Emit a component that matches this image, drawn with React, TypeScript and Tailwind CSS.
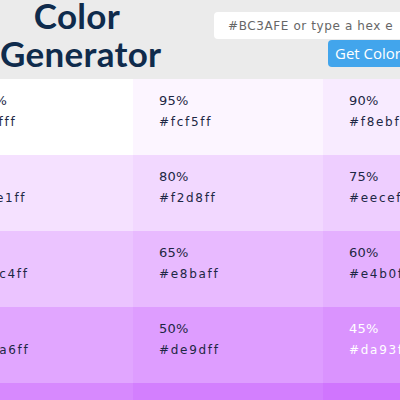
const BASE = "#bc3afe";

function tint(hex: string, p: number) {
  const n = parseInt(hex.slice(1), 16);
  const ch = [(n >> 16) & 255, (n >> 8) & 255, n & 255];
  return (
    "#" +
    ch
      .map((c) => Math.round(c + (255 - c) * p).toString(16).padStart(2, "0"))
      .join("")
  );
}

const SHADES = Array.from({ length: 15 }, (_, i) => {
  const pct = 100 - i * 5;
  return { pct, hex: tint(BASE, pct / 100) };
});

export default function App() {
  return (
    <div className="h-[400px] w-[400px] overflow-hidden bg-[#ebebeb] font-['DejaVu_Sans',sans-serif]">
      <header className="flex h-[79px]">
        <h1 className="mt-[-4px] w-[154px] shrink-0 whitespace-nowrap text-center font-['Lato',sans-serif] text-[35px] font-bold leading-[38px] tracking-[0.3px] text-[#0f2b4c]">
          Color
          <br />
          Generator
        </h1>
        <div className="ml-[60px] mt-[12px] flex w-[200px] shrink-0 flex-col items-end gap-px">
          <input
            placeholder="#BC3AFE or type a hex e"
            className="h-[27px] w-full rounded-[4px] bg-white px-[14px] text-[12px] tracking-[0.6px] text-[#555] placeholder:text-[#666] outline-none"
          />
          <button className="h-[27px] w-[86px] rounded-[4px] bg-[#42a5ec] pl-[7px] text-left font-['Open_Sans',sans-serif] text-[15px] text-white">
            Get Colors
          </button>
        </div>
      </header>

      <div className="ml-[-57px] grid w-[570px] grid-cols-[190px_190px_190px] auto-rows-[76px]">
        {SHADES.map((s) => (
          <div
            key={s.pct}
            className={`pl-[26px] pt-[12px] ${s.pct <= 45 ? "text-white" : "text-[#1d2744]"}`}
            style={{ backgroundColor: s.hex }}
          >
            <div className="text-[13px] leading-[20px] tracking-[0.2px]">{s.pct}%</div>
            <div className="text-[12px] leading-[22px] tracking-[1.7px]">{s.hex}</div>
          </div>
        ))}
      </div>
    </div>
  );
}
